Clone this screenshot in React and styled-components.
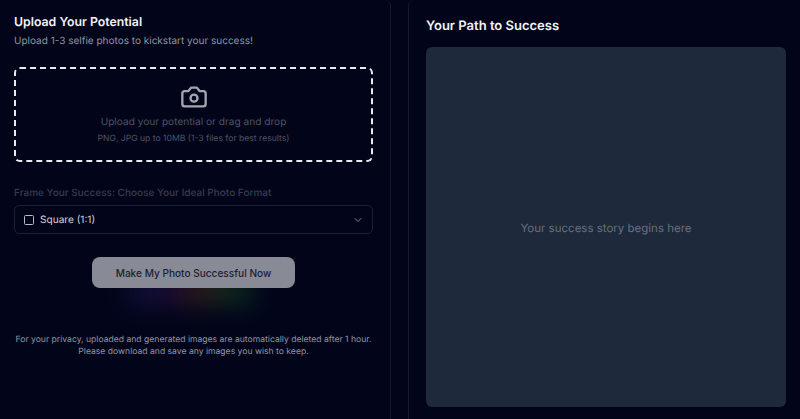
import React from "react";
import styled, { createGlobalStyle } from "styled-components";
import { ChevronDown } from "lucide-react";

const Global = createGlobalStyle`
  html, body { margin: 0; height: 100%; background: #02051a; overflow: hidden; }
  #root { height: 100%; }
  * { box-sizing: border-box; }
  body { font-family: Inter, "Liberation Sans", sans-serif; text-rendering: geometricPrecision; }
`;
const Page = styled.div`
  display: flex; gap: 17px; height: 419px; width: 800px; background: #02051a;
`;
const LeftPanel = styled.section`
  width: 391px; flex: none; height: 419px; padding: 13px 17px 0 14px;
  border-right: 1px solid #151b2e; border-top-right-radius: 6px;
`;
const RightPanel = styled.section`
  flex: 1; height: 419px; padding: 18px 14px 12px 17px; display: flex; flex-direction: column;
  border-left: 1px solid #151b2e; border-top-left-radius: 6px;
`;
const LeftTitle = styled.h2`
  margin: 0; font-size: 12.3px; line-height: 17px; font-weight: 600; color: #f1f3f7;
`;
const RightTitle = styled.h2`
  margin: 0; font-size: 13px; line-height: 17px; font-weight: 600; color: #f1f3f7;
`;
const Subtitle = styled.p`
  margin: 3px 0 0; font-size: 10px; line-height: 17px; color: #8f94a3;
`;
const Drop = styled.div`
  margin-top: 17px; height: 95px; border: 2px dashed #e8eaf0; border-radius: 6px;
  display: flex; flex-direction: column; align-items: center; padding-top: 14px;
`;
const DropText = styled.p`
  margin: 4px 0 0; font-size: 10.15px; line-height: 15px; color: #4e5363;
`;
const DropHint = styled.p`
  margin: 2px 0 0; font-size: 8.6px; line-height: 14px; color: #4e5363;
`;
const Label = styled.div`
  margin-top: 24px; font-size: 10px; line-height: 14px; font-weight: 500; color: #373b4f;
`;
const Select = styled.div`
  margin-top: 5px; height: 29px; border: 1px solid #1b2033; border-radius: 5px;
  display: flex; align-items: center; padding: 0 8px 0 9px; gap: 6px;
  color: #cfd2da; font-size: 10.1px;
`;
const Square = styled.span`
  width: 10px; height: 10px; border: 1.3px solid #b8bbc5; border-radius: 1.5px; flex: none;
`;
const Chevron = styled(ChevronDown)`
  margin-left: auto; color: #7b8090;
`;
const ButtonWrap = styled.div`
  position: relative; width: 203px; margin: 23px auto 0;
`;
const Glow = styled.div`
  position: absolute; left: 38px; right: 42px; top: 22px; height: 24px;
  background: linear-gradient(90deg, #1c2a78 0%, #3a1660 30%, #7a2f20 50%, #4c5a1c 70%, #14602c 90%);
  filter: blur(12px); opacity: .45;
`;
const Button = styled.button`
  position: relative; display: block; width: 100%; height: 31px; border: 0; border-radius: 8px;
  background: #888b96; color: #1c2033; font: 500 10.1px Inter, sans-serif;
`;
const Notice = styled.p`
  margin: 47px 0 0; font-size: 8.6px; line-height: 11.5px; color: #8f94a3; text-align: center; white-space: nowrap;
`;
const Preview = styled.div`
  margin-top: 12px; flex: 1; background: #1e293b; border-radius: 6px;
  display: flex; align-items: center; justify-content: center; padding-top: 1px;
  color: #667080; font-size: 11.5px;
`;

const Camera = () => (
  <svg width="28" height="28" viewBox="0 0 24 24" fill="none" stroke="#a3a6b0" strokeWidth="2" strokeLinecap="round" strokeLinejoin="round">
    <path d="M14.5 4h-5L7 7H4a2 2 0 0 0-2 2v9a2 2 0 0 0 2 2h16a2 2 0 0 0 2-2V9a2 2 0 0 0-2-2h-3l-2.5-3z" />
    <circle cx="12" cy="13" r="3" />
  </svg>
);

export default function App() {
  return (
    <Page>
      <Global />
      <LeftPanel>
        <LeftTitle>Upload Your Potential</LeftTitle>
        <Subtitle>Upload 1-3 selfie photos to kickstart your success!</Subtitle>
        <Drop>
          <Camera />
          <DropText>Upload your potential or drag and drop</DropText>
          <DropHint>PNG, JPG up to 10MB (1-3 files for best results)</DropHint>
        </Drop>
        <Label>Frame Your Success: Choose Your Ideal Photo Format</Label>
        <Select>
          <Square />
          Square (1:1)
          <Chevron size={12} />
        </Select>
        <ButtonWrap>
          <Glow />
          <Button>Make My Photo Successful Now</Button>
        </ButtonWrap>
        <Notice>
          For your privacy, uploaded and generated images are automatically deleted after 1 hour.
          <br />
          Please download and save any images you wish to keep.
        </Notice>
      </LeftPanel>
      <RightPanel>
        <RightTitle>Your Path to Success</RightTitle>
        <Preview>Your success story begins here</Preview>
      </RightPanel>
    </Page>
  );
}
